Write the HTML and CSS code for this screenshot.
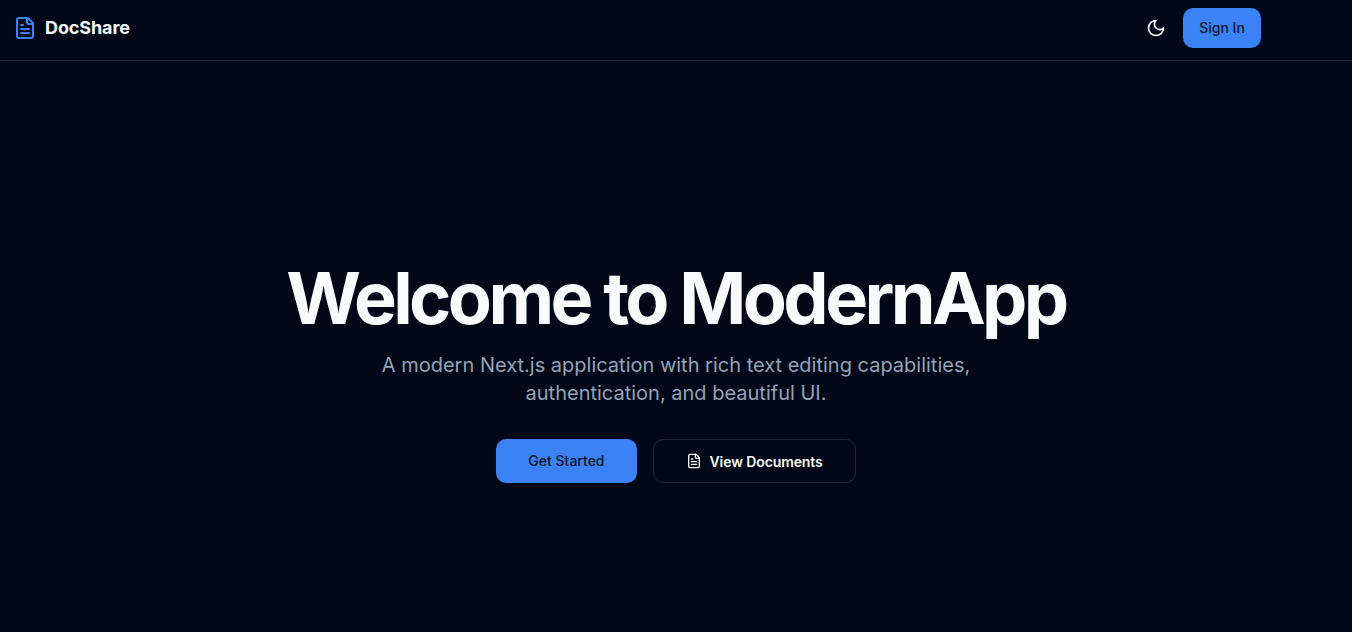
FILE: index.html
```html
<!DOCTYPE html>
<html lang="en">
<head>
  <meta charset="UTF-8" />
  <meta name="viewport" content="width=device-width, initial-scale=1.0"/>
  <title>DocShare</title>
  <link rel="stylesheet" href="styles.css">
</head>

<body>
  <header class="site-header">
    <a href="#" class="brand">
      <svg class="brand-icon" viewBox="0 0 24 24" fill="none" stroke="currentColor" stroke-width="2" stroke-linecap="round" stroke-linejoin="round">
        <path d="M15 2H6a2 2 0 0 0-2 2v16a2 2 0 0 0 2 2h12a2 2 0 0 0 2-2V7Z"/>
        <path d="M14 2v4a2 2 0 0 0 2 2h4"/>
        <path d="M10 9H8"/>
        <path d="M16 13H8"/>
        <path d="M16 17H8"/>
      </svg>
      <span class="brand-name">DocShare</span>
    </a>
    <div class="header-actions">
      <button type="button" class="theme-btn" aria-label="Toggle theme">
        <svg viewBox="0 0 24 24" fill="none" stroke="currentColor" stroke-width="2" stroke-linecap="round" stroke-linejoin="round">
          <path d="M12 3a6 6 0 0 0 9 9 9 9 0 1 1-9-9Z"/>
        </svg>
      </button>
      <button type="button" class="btn btn-primary signin-btn">Sign In</button>
    </div>
  </header>

  <main class="hero">
    <h1>Welcome to ModernApp</h1>
    <p>A modern Next.js application with rich text editing capabilities, authentication, and beautiful UI.</p>
    <div class="hero-actions">
      <button type="button" class="btn btn-primary hero-btn">Get Started</button>
      <button type="button" class="btn btn-outline hero-btn">
        <svg viewBox="0 0 24 24" fill="none" stroke="currentColor" stroke-width="2" stroke-linecap="round" stroke-linejoin="round">
          <path d="M15 2H6a2 2 0 0 0-2 2v16a2 2 0 0 0 2 2h12a2 2 0 0 0 2-2V7Z"/>
          <path d="M14 2v4a2 2 0 0 0 2 2h4"/>
          <path d="M10 9H8"/>
          <path d="M16 13H8"/>
          <path d="M16 17H8"/>
        </svg>
        View Documents
      </button>
    </div>
  </main>
</body>
</html>
```

FILE: styles.css
```css
* {
  box-sizing: border-box;
}

body {
  margin: 0;
  font-family: Inter, "Noto Sans", sans-serif;
  background: #020817;
  color: #f8fafc;
  min-height: 100vh;
  overflow: hidden;
}

.site-header {
  height: 61px;
  padding: 8px 91px 12px 16px;
  border-bottom: 1px solid #1e293b;
  display: flex;
  justify-content: space-between;
  align-items: center;
}

.brand {
  display: flex;
  align-items: center;
  gap: 8px;
  color: #f8fafc;
  font-size: 18px;
  font-weight: 700;
  letter-spacing: -0.1px;
  text-decoration: none;
}

.brand-icon {
  width: 24px;
  height: 24px;
  color: #3b82f6;
  margin-left: -3px;
}

.brand-name {
  padding-bottom: 2px;
}

.header-actions {
  display: flex;
  align-items: center;
  gap: 7px;
}

.theme-btn {
  width: 40px;
  height: 40px;
  padding: 0;
  border: none;
  background: none;
  color: #f8fafc;
  display: flex;
  justify-content: center;
  align-items: center;
}

.theme-btn svg {
  width: 20px;
  height: 20px;
}

.btn {
  font-family: inherit;
  font-size: 14px;
  font-weight: 500;
  border-radius: 10px;
  display: inline-flex;
  justify-content: center;
  align-items: center;
}

.btn-primary {
  background: #3b82f6;
  color: #0f172a;
  border: none;
  padding-bottom: 2px;
}

.btn-outline {
  background: #020817;
  color: #f8fafc;
  border: 1px solid #1e293b;
  font-weight: 600;
  letter-spacing: -0.1px;
  gap: 8px;
}

.btn-outline svg {
  width: 16px;
  height: 16px;
}

.signin-btn {
  width: 78px;
  height: 40px;
}

.hero {
  padding-top: 201px;
  display: flex;
  flex-direction: column;
  align-items: center;
  text-align: center;
}

.hero h1 {
  margin: 0;
  font-size: 72px;
  line-height: 72px;
  font-weight: 700;
  letter-spacing: -3.6px;
}

.hero p {
  margin: 17px 0 0;
  max-width: 672px;
  color: #94a3b8;
  font-size: 20px;
  line-height: 28px;
}

.hero-actions {
  margin-top: 32px;
  display: flex;
  gap: 16px;
}

.hero-btn {
  height: 44px;
  padding-left: 32px;
  padding-right: 32px;
}
```
